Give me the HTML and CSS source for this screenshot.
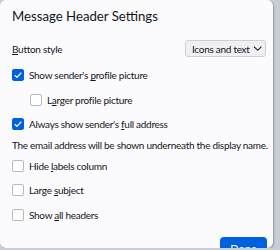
FILE: index.html
```html
<!DOCTYPE html>
<html lang="en">
<head>
    <meta charset="UTF-8">
    <link rel="stylesheet" href="styles.css">
</head>
<body>
    <div class="dialog">
        <!--title-->
        <h1 class="title">Message Header Settings</h1>

        <div class="row-select">
            <label><u>B</u>utton style</label>
            <div class="select"><span>Icons and text</span>
                <svg width="10" height="7" viewBox="0 0 10 7"><path d="M1 1.5 L5 5.5 L9 1.5" fill="none" stroke="#15141a" stroke-width="1.1"/></svg>
            </div>
        </div>

        <div class="check-list">
            <div class="check on"><span class="box"></span><span>Show sender's <u>p</u>rofile picture</span></div>
            <div class="check sub"><span class="box"></span><span>L<u>a</u>rger profile picture</span></div>
            <div class="check on"><span class="box"></span><span>Always show sender's <u>f</u>ull address</span></div>
            <p class="note">The email address will be shown underneath the display name.</p>
            <div class="check"><span class="box"></span><span>Hide <u>l</u>abels column</span></div>
            <div class="check"><span class="box"></span><span>Large <u>s</u>ubject</span></div>
            <div class="check"><span class="box"></span><span>Show <u>a</u>ll headers</span></div>
        </div>

        <div class="footer">
            <a class="done-btn">Done</a>
        </div>
    </div>
</body>
</html>
```

FILE: styles.css
```css
body{
    margin:0;
    background:#c9ced6;
    font-family:"Lato", "Noto Sans", sans-serif;
    color:#15141a;
    overflow:hidden;
}
.dialog{
    width:273px;
    height:248px;
    background:#fbfbfd;
    border-radius:6px;
    box-shadow:1px 1px 2px rgba(0,0,0,0.25);
    padding:0 0 0 12px;
    box-sizing:border-box;
    display:flex;
    flex-direction:column;
    font-size:10px;
    letter-spacing:-0.28px;
}
.title{
    margin:7px 0 0 0;
    font-size:13.2px;
    font-weight:normal;
    line-height:18px;
    letter-spacing:0;
}
.row-select{
    display:flex;
    justify-content:space-between;
    align-items:center;
    margin-top:15px;
    padding-right:7px;
}
.select{
    height:17px;
    width:81px;
    box-sizing:border-box;
    border:1px solid #cfcfd8;
    background:#f0f0f4;
    border-radius:3px;
    display:flex;
    align-items:center;
    justify-content:space-between;
    gap:3px;
    padding:0 3px 0 6px;
    white-space:nowrap;
}
.check-list{
    margin-top:6px;
}
.check{
    display:flex;
    align-items:center;
    height:24.5px;
}
.check.sub{
    padding-left:18px;
}
.box{
    width:12px;
    height:12px;
    box-sizing:border-box;
    border:1px solid #b8b8c0;
    border-radius:2px;
    background:white;
    margin-right:5px;
    flex-shrink:0;
}
.check.on .box{
    background:#0061e0 url("data:image/svg+xml;utf8,<svg xmlns='http://www.w3.org/2000/svg' width='12' height='12'><path d='M2.8 6.2 L5 8.4 L9.3 3.6' fill='none' stroke='white' stroke-width='1.3'/></svg>") center no-repeat;
    border-color:#0061e0;
}
.note{
    margin:0;
    height:17px;
    line-height:17px;
    white-space:nowrap;
}
.footer{
    display:flex;
    justify-content:flex-end;
    padding-right:6px;
    margin-top:10px;
}
.done-btn{
    width:47px;
    height:24px;
    background:#0061e0;
    color:white;
    border-radius:4px;
    text-align:center;
    line-height:24px;
    font-size:11px;
    letter-spacing:0;
}
```
